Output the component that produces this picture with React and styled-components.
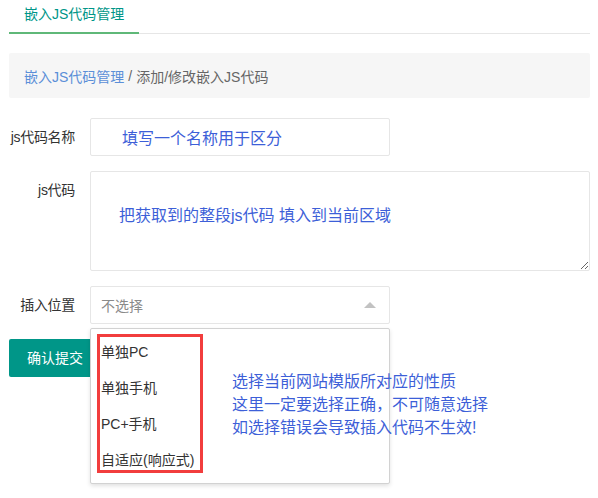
import React from "react"
import styled, { createGlobalStyle } from "styled-components"

const GlobalStyle = createGlobalStyle`
  html, body {
    margin: 0;
    padding: 0;
    background: #fff;
  }
  body {
    font-family: "Liberation Sans", "Noto Sans CJK SC", sans-serif;
    font-size: 14px;
    color: #333;
  }
  * { box-sizing: border-box; }
`

const options = ["单独PC", "单独手机", "PC+手机", "自适应(响应式)"]

function App() {
  return (
    <>
      <GlobalStyle />
      <Page>
        <TabBar>
          <Tab active>嵌入JS代码管理</Tab>
        </TabBar>

        <Crumb>
          <CrumbLink>嵌入JS代码管理</CrumbLink>
          <Sep>/</Sep>
          <span>添加/修改嵌入JS代码</span>
        </Crumb>

        <Form>
          <Item>
            <Label>js代码名称</Label>
            <Block width="300px">
              <Input readOnly value="填写一个名称用于区分" />
            </Block>
          </Item>

          <Item>
            <Label>js代码</Label>
            <Block>
              <TextArea readOnly value="把获取到的整段js代码 填入到当前区域" />
            </Block>
          </Item>

          <Item>
            <Label>插入位置</Label>
            <Block width="300px">
              <SelectBox>
                <span>不选择</span>
                <Caret />
              </SelectBox>
              <Dropdown>
                {options.map((o) => (
                  <Option key={o}>{o}</Option>
                ))}
                <Marker />
              </Dropdown>
            </Block>
          </Item>

          <Item>
            <SubmitButton>确认提交</SubmitButton>
          </Item>

          <Note>
            选择当前网站模版所对应的性质
            <br />
            这里一定要选择正确，不可随意选择
            <br />
            如选择错误会导致插入代码不生效!
          </Note>
        </Form>
      </Page>
    </>
  )
}

export default App

const Page = styled.div`
  padding: 0 8px 0 9px;
  width: 598px;
  height: 498px;
  overflow: hidden;
`

const TabBar = styled.div`
  display: flex;
  height: 34px;
  border-bottom: 1px solid #e6e6e6;
`

const Tab = styled.div`
  height: 34px;
  padding: 0 15px;
  line-height: 28px;
  font-size: 14px;
  color: ${(p) => (p.active ? "#009688" : "#333")};
  border-bottom: 2px solid ${(p) => (p.active ? "#5fb878" : "transparent")};
  margin-bottom: -1px;
`

const Crumb = styled.div`
  margin-top: 19px;
  height: 45px;
  padding: 0 15px;
  display: flex;
  align-items: center;
  background: #f6f6f6;
  border-radius: 2px;
  font-size: 14px;
  color: #666;
`

const CrumbLink = styled.span`
  color: #5b8fd8;
`

const Sep = styled.span`
  margin: 0 4px;
  color: #666;
`

const Form = styled.div`
  position: relative;
  margin-top: 20px;
`

const Item = styled.div`
  display: flex;
  align-items: flex-start;
  margin-bottom: 15px;
`

const Label = styled.label`
  width: 81px;
  flex: none;
  display: flex;
  justify-content: flex-end;
  white-space: nowrap;
  padding: 9px 15px 9px 0;
  line-height: 20px;
  font-size: 14px;
  letter-spacing: -0.3px;
  color: #333;
`

const Block = styled.div`
  position: relative;
  width: ${(p) => p.width || "500px"};
`

const fieldBase = `
  display: block;
  width: 100%;
  border: 1px solid #e6e6e6;
  border-radius: 2px;
  background: #fff;
  outline: none;
  font-family: "Liberation Sans", "Noto Sans CJK SC", sans-serif;
  font-size: 16px;
  color: #3d5fd8;
`

const Input = styled.input`
  ${fieldBase}
  height: 38px;
  padding: 0 10px 0 31px;
  line-height: 36px;
`

const TextArea = styled.textarea`
  ${fieldBase}
  height: 100px;
  padding: 34px 10px 0 28px;
  line-height: 20px;
  resize: vertical;
`

const SelectBox = styled.div`
  position: relative;
  height: 38px;
  border: 1px solid #e6e6e6;
  border-radius: 2px;
  padding: 0 10px;
  display: flex;
  align-items: center;
  font-size: 14px;
  color: #8a8a8a;
`

const Caret = styled.i`
  position: absolute;
  right: 13px;
  top: 15px;
  width: 0;
  height: 0;
  border-left: 6px solid transparent;
  border-right: 6px solid transparent;
  border-bottom: 6px solid #c2c2c2;
`

const Dropdown = styled.div`
  position: absolute;
  left: 0;
  top: 42px;
  width: 100%;
  padding: 5px 0;
  background: #fff;
  border: 1px solid #d2d2d2;
  border-radius: 2px;
  box-shadow: 0 2px 4px rgba(0, 0, 0, 0.12);
  z-index: 5;
`

const Option = styled.div`
  height: 36px;
  line-height: 36px;
  padding: 0 10px;
  font-size: 14px;
  color: #333;
`

const Marker = styled.div`
  position: absolute;
  left: 6px;
  top: 5px;
  width: 106px;
  height: 139px;
  border: 3px solid #f23d3d;
`

const SubmitButton = styled.button`
  height: 38px;
  padding: 0 18px;
  border: none;
  border-radius: 2px;
  background: #009688;
  color: #fff;
  font-family: "Liberation Sans", "Noto Sans CJK SC", sans-serif;
  font-size: 14px;
  line-height: 38px;
`

const Note = styled.div`
  position: absolute;
  left: 223px;
  top: 252px;
  z-index: 6;
  font-size: 16px;
  line-height: 23px;
  color: #3d5fd8;
  white-space: nowrap;
`
